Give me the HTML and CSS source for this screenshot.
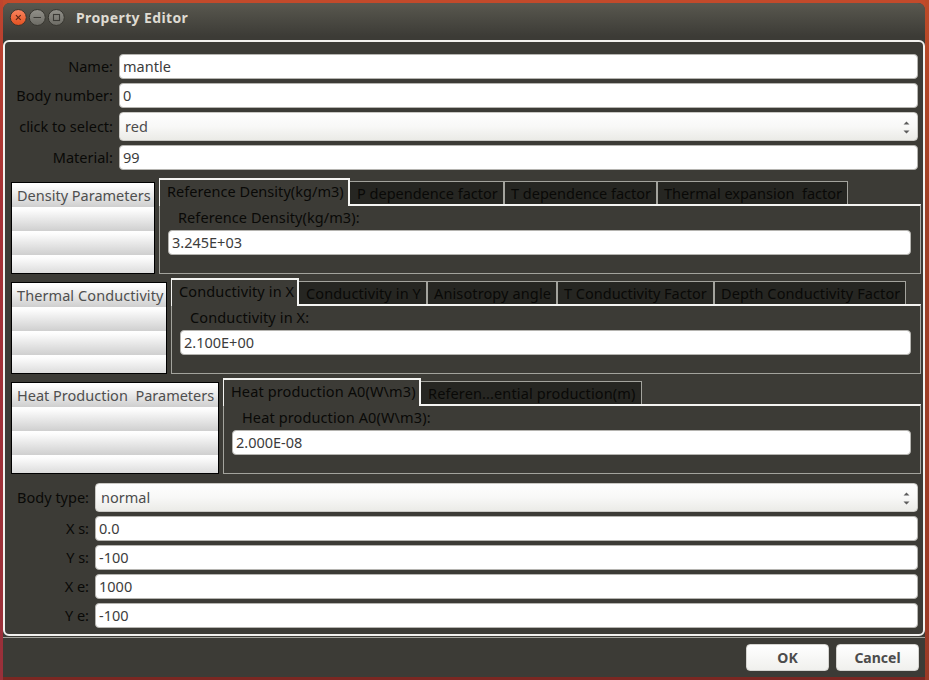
FILE: index.html
```html
<!DOCTYPE html>
<html lang="en">
<head>
<meta charset="utf-8">
<title>Property Editor</title>
<link rel="stylesheet" href="styles.css">
</head>
<body>
<div class="window">
  <header class="titlebar">
    <svg class="controls" width="56" height="18" viewBox="0 0 56 18">
      <defs>
        <linearGradient id="red" x2="0" y2="1"><stop offset="0" stop-color="#f98560"/><stop offset="1" stop-color="#e3501f"/></linearGradient>
        <linearGradient id="grey" x2="0" y2="1"><stop offset="0" stop-color="#92918a"/><stop offset="1" stop-color="#6c6b64"/></linearGradient>
      </defs>
      <circle cx="9.3" cy="8.5" r="8" fill="url(#red)" stroke="#36352f"/>
      <path d="M6.9 6.1l4.8 4.8M11.7 6.1l-4.8 4.8" stroke="#5b2413" stroke-width="1.1"/>
      <circle cx="28.3" cy="8.5" r="8" fill="url(#grey)" stroke="#36352f"/>
      <path d="M24.5 8.5h7.5" stroke="#3b3a35" stroke-width="1"/>
      <circle cx="47.3" cy="8.5" r="8" fill="url(#grey)" stroke="#36352f"/>
      <rect x="44.5" y="5.5" width="6" height="6" fill="none" stroke="#3b3a35" stroke-width="1.1"/>
    </svg>
    <h1 class="title">Property Editor</h1>
  </header>
  <main class="frame">
    <div class="form form-top">
      <label>Name:</label><div class="entry">mantle</div>
      <label>Body number:</label><div class="entry">0</div>
      <label>click to select:</label><div class="combo">red<svg width="7" height="13" viewBox="0 0 7 13"><path d="M0.5 3.5L3.5 0.5L6.5 3.5zM0.5 9.5L3.5 12.5L6.5 9.5z" fill="#5c5c5c"/></svg></div>
      <label>Material:</label><div class="entry">99</div>
    </div>
    <section class="group">
      <div class="list list-density">Density Parameters</div>
      <div class="notebook">
        <nav class="tabs">
          <div class="tab active w191">Reference Density(kg/m3)</div>
          <div class="tab first w154">P dependence factor</div>
          <div class="tab w153">T dependence factor</div>
          <div class="tab w191">Thermal expansion&nbsp; factor</div>
        </nav>
        <div class="panel"><div class="caption">Reference Density(kg/m3):</div><div class="entry">3.245E+03</div></div>
      </div>
    </section>
    <section class="group">
      <div class="list list-thermal">Thermal Conductivity</div>
      <div class="notebook">
        <nav class="tabs">
          <div class="tab active wide-text w128">Conductivity in X</div>
          <div class="tab first wide-text w128">Conductivity in Y</div>
          <div class="tab wide-text w130">Anisotropy angle</div>
          <div class="tab w157">T Conductivity Factor</div>
          <div class="tab wide-text w192">Depth Conductivity Factor</div>
        </nav>
        <div class="panel"><div class="caption wide-text">Conductivity in X:</div><div class="entry">2.100E+00</div></div>
      </div>
    </section>
    <section class="group">
      <div class="list list-heat">Heat Production&nbsp; Parameters</div>
      <div class="notebook">
        <nav class="tabs">
          <div class="tab active wide-text w198">Heat production A0(W\m3)</div>
          <div class="tab first wide-text w221">Referen...ential production(m)</div>
        </nav>
        <div class="panel"><div class="caption wide-text">Heat production A0(W\m3):</div><div class="entry">2.000E-08</div></div>
      </div>
    </section>
    <div class="form form-bottom">
      <label>Body type:</label><div class="combo">normal<svg width="7" height="13" viewBox="0 0 7 13"><path d="M0.5 3.5L3.5 0.5L6.5 3.5zM0.5 9.5L3.5 12.5L6.5 9.5z" fill="#5c5c5c"/></svg></div>
      <label>X s:</label><div class="entry">0.0</div>
      <label>Y s:</label><div class="entry">-100</div>
      <label>X e:</label><div class="entry">1000</div>
      <label>Y e:</label><div class="entry">-100</div>
    </div>
  </main>
  <footer class="actions">
    <button>OK</button>
    <button>Cancel</button>
  </footer>
</div>
</body>
</html>
```
FILE: styles.css
```css
* { box-sizing: border-box; }
body {
  margin: 0;
  width: 929px;
  height: 680px;
  padding: 3px 4px 3px 3px;
  overflow: hidden;
  background:
    linear-gradient(#bf452e, #a63136 30%, #99303a) 0 0 / 3px 100% no-repeat,
    linear-gradient(#bd4a28, #9f4026 30%, #9a3a26) 100% 0 / 4px 100% no-repeat,
    linear-gradient(#c24a2b 50%, #7a2722 50%);
  font: 14.5px/20px "Noto Sans", sans-serif;
  color: #090907;
}
.window {
  width: 922px;
  height: 674px;
  background: #3c3b36;
  border-radius: 7px 7px 0 0;
}
.titlebar {
  display: flex;
  align-items: center;
  height: 37px;
  padding: 0 0 7px 6px;
  border-radius: 7px 7px 0 0;
  background: linear-gradient(#59584f, #3c3b36 90%);
}
.title {
  margin: 0 0 0 11px;
  font: bold 14px/20px "Noto Sans", sans-serif;
  letter-spacing: 0.38px;
  color: #dfdbd2;
}
.frame {
  width: 922px;
  height: 596px;
  padding: 12px 0 0 6px;
  border: 2px solid #f2f1ee;
  border-radius: 6px;
}
.form { display: grid; row-gap: 4px; column-gap: 6px; padding-right: 5px; }
.form-top { grid-template-columns: 102px 799px; height: 124px; align-content: start; }
.form-bottom { grid-template-columns: 78px 823px; padding-top: 5px; }
.form label { align-self: center; padding-bottom: 2px; text-align: right; white-space: nowrap; }
.entry {
  height: 25px;
  padding: 1px 3px;
  background: #fff;
  border: 1px solid #b5b4b0;
  border-radius: 4px;
  color: #3c3c3c;
}
.combo {
  display: flex;
  align-items: center;
  justify-content: space-between;
  height: 29px;
  padding: 0 7px 2px 5px;
  border-radius: 4px;
  border: 1px solid #c9c8c4;
  background: linear-gradient(#fefefe, #f8f8f7 50%, #ebebe7);
  color: #4c4c4c;
}
.combo svg { margin-top: 4px; }
.group { display: flex; align-items: flex-end; height: 100px; padding: 0 2px 4px 0; }
.list {
  flex: none;
  height: 92px;
  padding: 2px 0 0 5px;
  border: 1px solid #000;
  background: repeating-linear-gradient(#fff 0, #fcfcfc 3px, #cfcfcf 24px);
  color: #4f4f4f;
  white-space: nowrap;
}
.list-density { width: 144px; }
.list-thermal { width: 156px; letter-spacing: 0.08px; }
.list-heat { width: 208px; }
.notebook { flex: 1; margin-left: 4px; display: flex; flex-direction: column; }
.tabs { display: flex; align-items: flex-end; height: 26px; }
.tab {
  height: 23px;
  padding: 1px 0 0 6px;
  border: 1px solid #a3a39d;
  border-width: 1px 1px 0 1px;
  background: #262622;
  white-space: nowrap;
}
.tab.first { padding-left: 7px; border-left: 0; }
.tab.active {
  position: relative;
  height: 28px;
  margin-bottom: -2px;
  border: 2px solid #f4f4f2;
  border-width: 2px 2px 0 1px;
  padding: 1px 0 0 7px;
  background: #3c3b36;
  letter-spacing: 0.04px;
}
.tab.wide-text, .caption.wide-text { letter-spacing: 0.12px; }
.w191 { width: 191px; } .w154 { width: 154px; } .w153 { width: 153px; }
.w128 { width: 128px; } .w130 { width: 130px; } .w157 { width: 157px; }
.w192 { width: 192px; } .w198 { width: 198px; } .w221 { width: 221px; }
.panel { height: 70px; padding: 3px 9px 0 8px; border: 1px solid #a3a39d; border-top: 2px solid #f4f4f2; }
.caption { height: 21px; padding-left: 10px; line-height: 17px; letter-spacing: 0.08px; }
.actions { display: flex; justify-content: flex-end; gap: 7px; margin-top: 1px; padding: 6px 6px 0 0; border-top: 1px solid #a3a39d; }
.actions button {
  width: 83px;
  height: 27px;
  padding: 1px 0 0;
  border: 1px solid #d5d4d0;
  border-radius: 4px;
  background: linear-gradient(#fff, #f0f0ed);
  font: bold 14px/20px "Noto Sans", sans-serif;
  color: #4c4c4c;
}
```
